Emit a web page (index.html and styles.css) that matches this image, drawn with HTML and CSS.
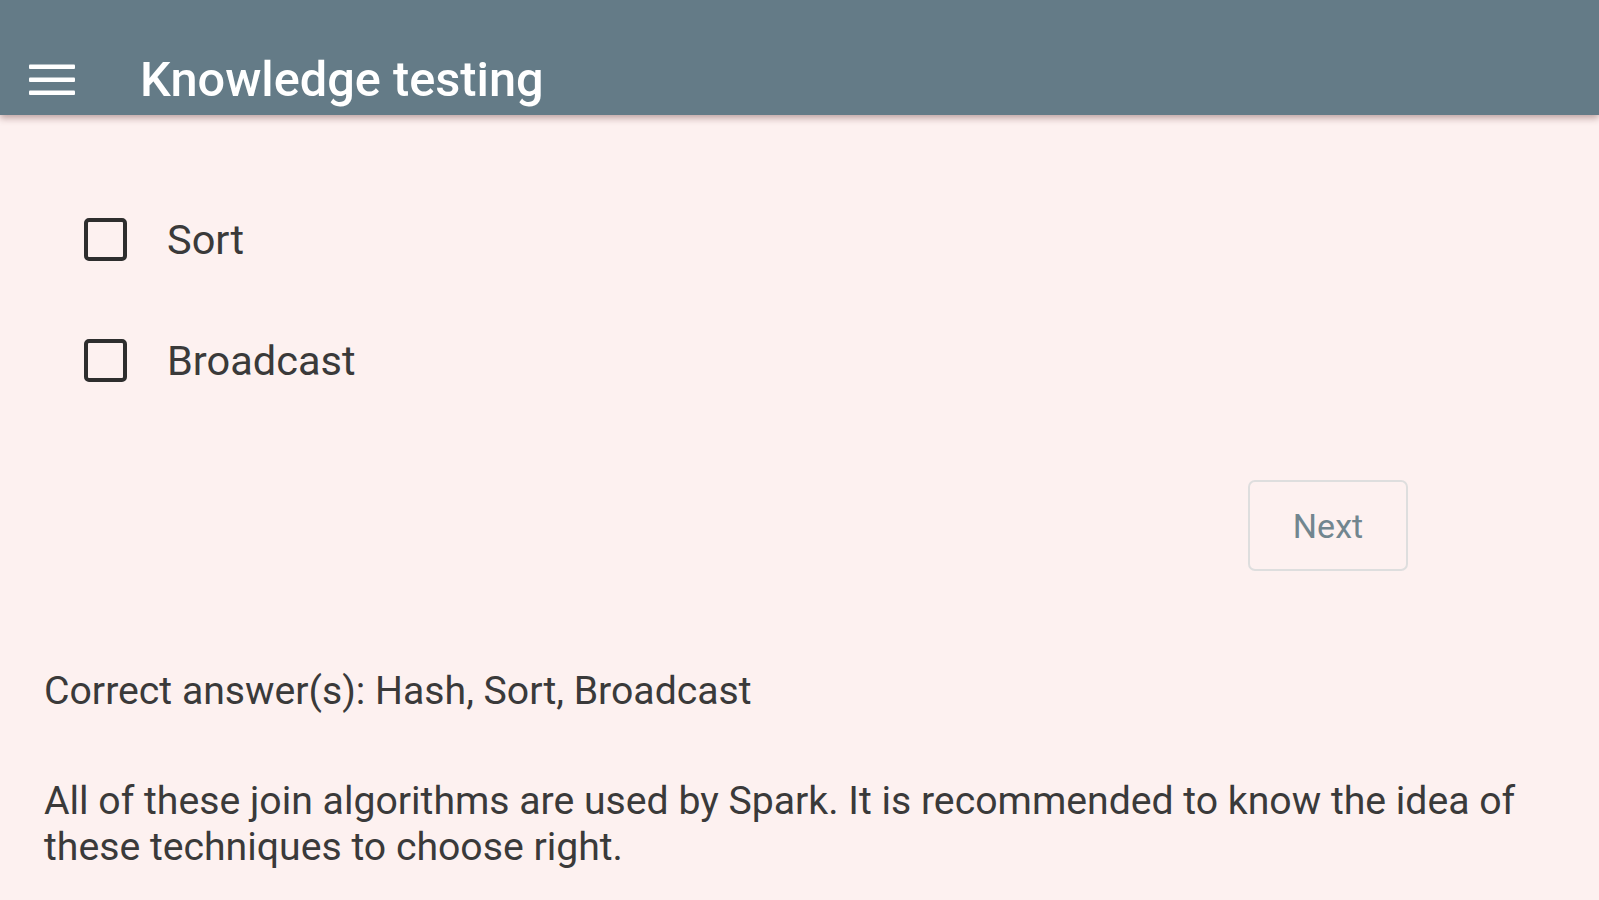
FILE: index.html
```html
<!DOCTYPE html>
<html>
<head>
<meta charset="utf-8">
<link rel="stylesheet" href="styles.css">
</head>
<body>
<header class="appbar">
  <svg class="menu" width="46" height="34" viewBox="0 0 46 34">
    <rect x="0" y="1.5" width="46" height="4.5" rx="1" fill="#fff"/>
    <rect x="0" y="14.5" width="46" height="4.5" rx="1" fill="#fff"/>
    <rect x="0" y="27.5" width="46" height="4.5" rx="1" fill="#fff"/>
  </svg>
  <h1 class="title">Knowledge testing</h1>
</header>
<main class="content">
  <ul class="options">
    <li class="option"><span class="box"></span><span class="label">Sort</span></li>
    <li class="option"><span class="box"></span><span class="label">Broadcast</span></li>
  </ul>
  <div class="actions">
    <button class="next">Next</button>
  </div>
  <p class="answer">Correct answer(s): Hash, Sort, Broadcast</p>
  <p class="explain">All of these join algorithms are used by Spark. It is recommended to know the idea of these techniques to choose right.</p>
</main>
</body>
</html>
```
FILE: styles.css
```css
html, body {
  margin: 0;
  padding: 0;
  background: #fdf1f0;
  font-family: Roboto, "Noto Sans", sans-serif;
  color: #333;
  height: 100%;
  overflow: hidden;
}
.appbar {
  height: 115px;
  background: #647b87;
  display: flex;
  align-items: center;
  padding: 45px 0 0 29px;
  box-sizing: border-box;
  box-shadow: 0 3px 7px rgba(90, 40, 40, 0.4);
  position: relative;
}
.menu {
  display: block;
}
.title {
  margin: 0 0 0 65px;
  font-size: 48.7px;
  font-weight: 500;
  color: #fff;
  line-height: 56px;
}
.content {
  padding: 0 44px;
}
.options {
  list-style: none;
  margin: 0;
  padding: 103px 0 0 40px;
  display: flex;
  flex-direction: column;
  gap: 78px;
}
.option {
  display: flex;
  align-items: center;
  height: 43px;
}
.box {
  width: 43px;
  height: 43px;
  box-sizing: border-box;
  border: 4px solid #2e2e2e;
  border-radius: 5px;
}
.label {
  margin-left: 40px;
  font-size: 41.5px;
  color: #3a3a3a;
}
.actions {
  display: flex;
  justify-content: flex-end;
  padding-right: 147px;
  margin-top: 98px;
}
.next {
  width: 160px;
  height: 91px;
  background: transparent;
  border: 2px solid #dedede;
  border-radius: 7px;
  font-family: Roboto, sans-serif;
  font-size: 34px;
  color: #72868f;
}
.answer {
  margin: 97px 0 0;
  font-size: 39.2px;
  line-height: 46px;
  color: #3a3a3a;
}
.explain {
  margin: 64px 0 0;
  font-size: 39.2px;
  line-height: 46px;
  color: #3a3a3a;
}
```
